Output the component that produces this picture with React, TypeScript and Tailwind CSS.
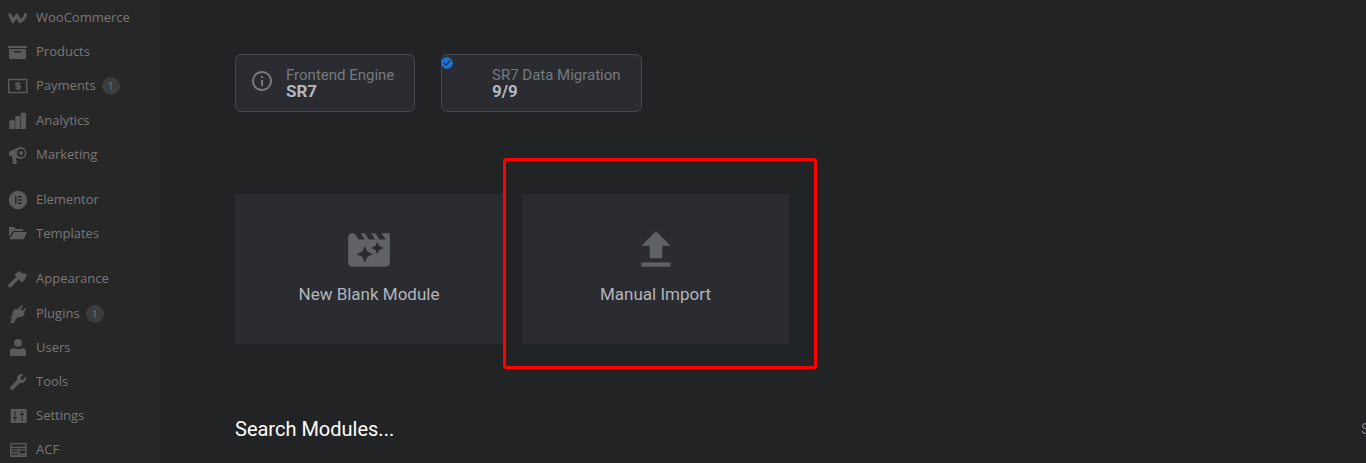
import { ReactNode } from "react";
import { MdCheckCircle, MdFileUpload, MdInfoOutline, MdMovieFilter } from "react-icons/md";

type MenuItem = { label: string; icon: ReactNode; badge?: string; spacing?: string };

const Ico = ({ children }: { children: ReactNode }) => (
  <svg viewBox="0 0 20 20" className="h-5 w-5 fill-[#5a5a5a]">
    {children}
  </svg>
);

const menu: MenuItem[] = [
  {
    label: "WooCommerce",
    icon: (
      <svg viewBox="0 0 20 20" className="h-5 w-5">
        <path
          d="M1.500 5.500 4.800 13.500 8.800 7 12 13.500c2.500-1 5-4 5.700-8"
          fill="none"
          stroke="#5a5a5a"
          strokeWidth="3.200"
          strokeLinejoin="round"
        />
      </svg>
    ),
  },
  {
    label: "Products",
    icon: (
      <Ico>
        <path d="M0 4h19v2H0zM1 7h17v10H1zm5 2v1.500h7V9z" fillRule="evenodd" />
      </Ico>
    ),
  },
  {
    label: "Payments",
    badge: "1",
    icon: (
      <svg viewBox="0 0 20 20" className="h-5 w-5">
        <rect x="0.800" y="3.500" width="18" height="13" fill="none" stroke="#5a5a5a" strokeWidth="1.500" />
        <path
          d="M12.500 7.500H8v2.500h4v2.600H7.500M10 5.800v8.400"
          fill="none"
          stroke="#5a5a5a"
          strokeWidth="1.500"
        />
      </svg>
    ),
  },
  {
    label: "Analytics",
    spacing: "mt-px",
    icon: (
      <Ico>
        <path d="M1.300 9.300h5.400V18H1.300zM7.300 5H12v13H7.300zM12.700 1.700H18V18h-5.300z" />
      </Ico>
    ),
  },
  {
    label: "Marketing",
    icon: (
      <Ico>
        <path
          d="M1 6.500 11 2.200A6 6 0 1 1 11 13.800L8 12.800 9 19H5L4 11.500 1 10.500ZM13 4a4 4 0 1 0 0 8 4 4 0 0 0 0-8ZM13 6a2 2 0 1 1 0 4 2 2 0 0 1 0-4Z"
          fillRule="evenodd"
        />
      </Ico>
    ),
  },
  {
    label: "Elementor",
    spacing: "mt-[11px]",
    icon: (
      <Ico>
        <path
          d="M10 .800a9.200 9.200 0 1 0 0 18.400 9.200 9.200 0 0 0 0-18.400zM7 6h1.500v8H7zM10 6h3.500v1.500H10zm0 3.200h3.500v1.500H10zm0 3.300h3.500V14H10z"
          fillRule="evenodd"
        />
      </Ico>
    ),
  },
  {
    label: "Templates",
    icon: (
      <Ico>
        <path d="M1 13V3h5l2 2h7v2H5zM5.800 8H19l-3.300 7.300H1.500z" />
      </Ico>
    ),
  },
  {
    label: "Appearance",
    spacing: "mt-[11px]",
    icon: (
      <svg viewBox="0 0 20 20" className="h-5 w-5">
        <path d="M2 16.500 9 9.500" stroke="#5a5a5a" strokeWidth="3.600" strokeLinecap="round" />
        <path d="M6.500 6 11 2l3 2 5.500 1.500-2 2.500-.5 2.500-3 3z" fill="#5a5a5a" />
      </svg>
    ),
  },
  {
    label: "Plugins",
    badge: "1",
    spacing: "mt-px",
    icon: (
      <Ico>
        <path d="M13.500 1 15 2.200 12.500 5.500l2 1.500L17 4l1.300 1.200L15.500 8.500l1.500 1.300-1 1.200c-1.800 2-4 2.700-6 1.700l-2.500 3c-.500 1.500-1 2.500-2.500 3.300H2l2-3.500L2.500 14l2-3c-.500-2 .2-4 2.200-5.500L8 4.500 9.300 6z" />
      </Ico>
    ),
  },
  {
    label: "Users",
    icon: (
      <Ico>
        <path d="M10 1a3.900 3.900 0 1 1 0 7.800A3.900 3.900 0 0 1 10 1zM2 18v-4.500c0-2 1.500-3.600 4-3.600 1 .8 2.500 1.200 4 1.200s3-.4 4-1.200c2.500 0 4 1.600 4 3.600V18z" />
      </Ico>
    ),
  },
  {
    label: "Tools",
    icon: (
      <Ico>
        <path d="M17.800 4.500c.7 2 .2 4-1.200 5.300-1.300 1.200-3 1.500-4.600 1L5.500 17.300c-.8.800-2 .8-2.800 0s-.8-2 0-2.800L9.200 8c-.5-1.600-.2-3.300 1-4.600C11.500 2 13.500 1.500 15.500 2.200L12.300 5.500l.6 2 2 .6z" />
      </Ico>
    ),
  },
  {
    label: "Settings",
    icon: (
      <Ico>
        <path
          d="M2.700 3h16v14h-16zM6.500 5v6H5v1.500h1.500V15h1v-2.500H9V11H7.500V5zm7 0v2.500H12V9h1.500v6h1V9H16V7.500h-1.500V5z"
          fillRule="evenodd"
        />
      </Ico>
    ),
  },
  {
    label: "ACF",
    icon: (
      <Ico>
        <path
          d="M2 3h16.700v14H2zm1.300 1.300v2.400h14V4.300zm0 3.700v1.300h6.700V8zm8 0v1.300h6V8zM3.300 10.500v1.300h6.700v-1.300zm8 0v3h6v-3zm-8 2.700v1.300h6.700v-1.300zm0 2.500v.2h14v-.2z"
          fillRule="evenodd"
        />
      </Ico>
    ),
  },
];

const StatusCard = ({
  width,
  title,
  value,
  icon,
}: {
  width: string;
  title: string;
  value: string;
  icon?: ReactNode;
}) => (
  <div className={`relative flex h-[58px] items-center rounded-md border border-[#46484c] bg-[#2b2c31] ${width}`}>
    {icon}
    <div className="flex flex-col">
      <span className="text-[15px] leading-4 text-[#75787d]">{title}</span>
      <span className="text-[17px] leading-4 font-bold text-[#b4b6ba]">{value}</span>
    </div>
  </div>
);

const ActionCard = ({ width, label, icon }: { width: string; label: string; icon: ReactNode }) => (
  <div className={`flex h-[150px] flex-col items-center bg-[#2b2c31] pt-[31px] ${width}`}>
    {icon}
    <span className="mt-[9px] text-[17px] leading-5 text-[#b1b5bb]">{label}</span>
  </div>
);

export default function App() {
  return (
    <div className="relative flex h-[463px] w-[1366px] overflow-hidden bg-[#222325] font-['Roboto',sans-serif]">
      <aside className="h-full w-[160px] shrink-0 bg-[#272727] pt-px font-['Open_Sans',sans-serif]">
        {menu.map((item) => (
          <div key={item.label} className={`flex h-[34px] items-center pl-2 ${item.spacing ?? ""}`}>
            <span className="flex w-7 shrink-0">{item.icon}</span>
            <span className="text-[13px] text-[#787878]">{item.label}</span>
            {item.badge && (
              <span className="ml-[6px] flex h-[18px] w-[18px] items-center justify-center rounded-full bg-[#3c3c3c] text-[11px] text-[#737373]">
                {item.badge}
              </span>
            )}
          </div>
        ))}
      </aside>

      <main className="min-w-0 flex-1 pt-[54px] pl-[75px]">
        <div className="flex gap-[26px]">
          <StatusCard
            width="w-[180px]"
            title="Frontend Engine"
            value="SR7"
            icon={
              <span className="flex w-[50px] justify-center pb-[5px] pl-[2px]">
                <MdInfoOutline className="h-6 w-6 text-[#75787d]" />
              </span>
            }
          />
          <StatusCard
            width="w-[201px] pl-[50px]"
            title="SR7 Data Migration"
            value="9/9"
            icon={
              <MdCheckCircle className="absolute top-[1px] -left-[2px] h-[14px] w-[14px] text-[#1a73d9]" />
            }
          />
        </div>

        <div className="mt-[82px] flex gap-[19px]">
          <ActionCard
            width="w-[268px]"
            label="New Blank Module"
            icon={<MdMovieFilter className="h-[50px] w-[50px] text-[#5f6266]" />}
          />
          <ActionCard
            width="w-[267px]"
            label="Manual Import"
            icon={<MdFileUpload className="h-[50px] w-[50px] text-[#5f6266]" />}
          />
        </div>

        <div className="mt-[73px] flex items-center justify-between">
          <span className="text-[20px] leading-6 text-white">Search Modules...</span>
          <span className="w-[5px] overflow-hidden text-[14px] leading-6 text-[#75787d]">S</span>
        </div>
      </main>

      {/* highlight drawn over the screenshot */}
      <div className="absolute top-[158px] left-[503px] h-[211px] w-[314px] rounded-[3px] border-[3px] border-[#ff0000]" />
    </div>
  );
}
